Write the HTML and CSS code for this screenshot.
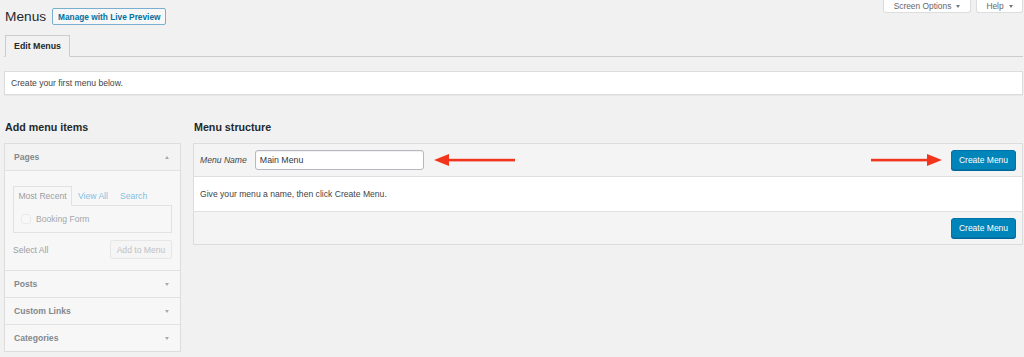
FILE: index.html
```html
<!DOCTYPE html>
<html lang="en">
<head>
    <meta charset="UTF-8">
    <meta name="viewport" content="width=device-width, initial-scale=1.0">
    <title>Menus</title>
    <link rel="stylesheet" href="styles.css">
</head>
<body>
    <div class="wrap">
        <!-- Title row + screen meta tabs -->
        <header class="page-head">
            <div class="title-group">
                <h1>Menus</h1>
                <a class="title-action" href="#">Manage with Live Preview</a>
            </div>
            <div class="screen-meta">
                <span class="meta-tab options">Screen Options <i class="caret"></i></span>
                <span class="meta-tab help">Help <i class="caret"></i></span>
            </div>
        </header>

        <nav class="nav-tabs">
            <span class="nav-tab">Edit Menus</span>
        </nav>

        <div class="notice">Create your first menu below.</div>

        <div class="columns">
            <!-- Add menu items -->
            <div class="sidebar">
                <h2>Add menu items</h2>
                <div class="accordion">
                    <div class="section open">
                        <div class="section-title">Pages <i class="arrow up"></i></div>
                        <div class="section-body">
                            <div class="inner-tabs">
                                <span class="inner-tab active">Most Recent</span>
                                <span class="inner-tab">View All</span>
                                <span class="inner-tab">Search</span>
                            </div>
                            <div class="inner-panel">
                                <label class="item"><span class="checkbox"></span>Booking Form</label>
                            </div>
                            <div class="section-actions">
                                <span class="select-all">Select All</span>
                                <span class="add-btn">Add to Menu</span>
                            </div>
                        </div>
                    </div>
                    <div class="section">
                        <div class="section-title">Posts <i class="arrow"></i></div>
                    </div>
                    <div class="section">
                        <div class="section-title">Custom Links <i class="arrow"></i></div>
                    </div>
                    <div class="section">
                        <div class="section-title">Categories <i class="arrow"></i></div>
                    </div>
                </div>
            </div>

            <!-- Menu structure -->
            <div class="management">
                <h2>Menu structure</h2>
                <div class="menu-edit">
                    <div class="menu-header">
                        <label class="menu-name-label">Menu Name</label>
                        <input class="menu-name" type="text" value="Main Menu" spellcheck="false">
                        <svg class="arrow-note left" width="81" height="12" viewBox="0 0 81 12">
                            <polygon points="0,6 15,0 15,12" fill="#f2361d"/>
                            <rect x="14" y="4.8" width="67" height="2.6" fill="#f2361d"/>
                        </svg>
                        <svg class="arrow-note right" width="71" height="12" viewBox="0 0 71 12">
                            <rect x="0" y="4.8" width="57" height="2.6" fill="#f2361d"/>
                            <polygon points="71,6 56,0 56,12" fill="#f2361d"/>
                        </svg>
                        <button class="btn-primary">Create Menu</button>
                    </div>
                    <div class="menu-body">Give your menu a name, then click Create Menu.</div>
                    <div class="menu-footer">
                        <button class="btn-primary">Create Menu</button>
                    </div>
                </div>
            </div>
        </div>
    </div>
</body>
</html>
```

FILE: styles.css
```css
body {
    margin: 0;
    padding: 0;
    font-family: "Liberation Sans", Arial, sans-serif;
    font-size: 8.6px;
    color: #444;
    background-color: #f1f1f1;
}
.wrap {
    padding: 0 1px 0 4px;
}
.page-head {
    display: flex;
    justify-content: space-between;
    align-items: flex-start;
    height: 25px;
}
.title-group {
    display: flex;
    align-items: center;
    margin-top: 8px;
    height: 17px;
}
h1 {
    margin: 0 0 0 1px;
    font-size: 13.7px;
    font-weight: normal;
    color: #23282d;
    line-height: 17px;
}
.title-action {
    margin-left: 6px;
    height: 17px;
    box-sizing: border-box;
    padding: 0 5px;
    display: flex;
    align-items: center;
    border: 1px solid #79b0cf;
    border-radius: 2px;
    background-color: #f7f7f7;
    color: #0071a1;
    font-size: 8.3px;
    font-weight: bold;
    text-decoration: none;
}
.screen-meta {
    display: flex;
    gap: 5px;
}
.meta-tab {
    height: 13px;
    box-sizing: border-box;
    display: flex;
    align-items: center;
    justify-content: center;
    gap: 5px;
    background-color: #fff;
    border: 1px solid #ddd;
    border-top: none;
    border-radius: 0 0 3px 3px;
    color: #666;
    font-size: 8.4px;
}
.meta-tab.options {
    width: 88px;
}
.meta-tab.help {
    width: 47px;
}
.caret {
    width: 0;
    height: 0;
    border-left: 2.5px solid transparent;
    border-right: 2.5px solid transparent;
    border-top: 3px solid #72777c;
}
.nav-tabs {
    margin-top: 10px;
    border-bottom: 1px solid #ccc;
    display: flex;
}
.nav-tab {
    margin-left: 1px;
    margin-bottom: -1px;
    width: 65px;
    height: 22px;
    box-sizing: border-box;
    display: flex;
    align-items: center;
    justify-content: center;
    border: 1px solid #ccc;
    border-bottom: 1px solid #f1f1f1;
    background-color: #f1f1f1;
    color: #23282d;
    font-size: 8.8px;
    font-weight: bold;
}
.notice {
    margin-top: 14px;
    height: 24px;
    box-sizing: border-box;
    padding: 0 6px;
    display: flex;
    align-items: center;
    background-color: #fff;
    border: 1px solid #dcdcdc;
    box-shadow: 0 1px 1px rgba(0, 0, 0, 0.04);
}
.columns {
    display: flex;
    gap: 12px;
    margin-top: 25px;
}
h2 {
    margin: 0 0 9px 1px;
    font-size: 10.7px;
    line-height: 14px;
    color: #23282d;
}
.sidebar {
    width: 177px;
    flex-shrink: 0;
}
.accordion {
    border: 1px solid #ddd;
    background-color: #f7f7f7;
    color: #8a8e92;
}
.section + .section {
    border-top: 1px solid #e2e2e2;
}
.section-title {
    height: 26px;
    padding: 0 9px;
    display: flex;
    align-items: center;
    justify-content: space-between;
    font-size: 8.6px;
    font-weight: bold;
    color: #84888c;
}
.open .section-title {
    background-color: #f3f3f3;
    border-bottom: 1px solid #e2e2e2;
}
.arrow {
    width: 0;
    height: 0;
    margin-right: 2px;
    border-left: 2.5px solid transparent;
    border-right: 2.5px solid transparent;
    border-top: 3px solid #a7aaad;
}
.arrow.up {
    border-top: none;
    border-bottom: 3px solid #a7aaad;
}
.section-body {
    padding: 15px 8px 11px 8px;
}
.inner-tabs {
    display: flex;
    height: 19px;
}
.inner-tab {
    display: flex;
    align-items: center;
    padding: 0 6px;
    color: #86c0df;
}
.inner-tab.active {
    width: 59px;
    box-sizing: border-box;
    justify-content: center;
    padding: 0;
    border: 1px solid #e2e2e2;
    border-bottom: 1px solid #f7f7f7;
    margin-bottom: -1px;
    color: #9a9ea2;
}
.inner-panel {
    height: 28px;
    box-sizing: border-box;
    padding: 0 7px;
    display: flex;
    align-items: center;
    border: 1px solid #e2e2e2;
}
.item {
    display: flex;
    align-items: center;
    gap: 5px;
    color: #a4a8ac;
}
.checkbox {
    width: 10px;
    height: 10px;
    box-sizing: border-box;
    border: 1px solid #eaeaea;
    border-radius: 3px;
    background-color: #f8f8f8;
}
.section-actions {
    margin-top: 7px;
    display: flex;
    justify-content: space-between;
    align-items: center;
}
.select-all {
    color: #9a9ea2;
}
.add-btn {
    width: 62px;
    height: 19px;
    box-sizing: border-box;
    display: flex;
    align-items: center;
    justify-content: center;
    border: 1px solid #e6e6e6;
    border-radius: 2px;
    background-color: #f5f5f5;
    color: #bfc2c5;
}
.management {
    flex: 1;
}
.menu-edit {
    border: 1px solid #dcdcdc;
    background-color: #fff;
}
.menu-header {
    display: flex;
    align-items: center;
    padding: 6px;
    background-color: #f4f4f4;
    border-bottom: 1px solid #dfdfdf;
}
.menu-name-label {
    font-style: italic;
    color: #444;
}
.menu-name {
    margin: 0 0 0 8px;
    width: 169px;
    height: 20px;
    box-sizing: border-box;
    padding: 0 4px;
    border: 1px solid #b5b9bd;
    border-radius: 3px;
    box-shadow: inset 0 1px 1px rgba(0, 0, 0, 0.06);
    font-family: inherit;
    font-size: 8.8px;
    color: #32373c;
}
.arrow-note.left {
    margin-left: 10px;
}
.arrow-note.right {
    margin-left: auto;
    margin-right: 9px;
}
.btn-primary {
    width: 65px;
    height: 20px;
    box-sizing: border-box;
    padding: 0;
    border: 1px solid #0073aa;
    border-radius: 3px;
    background-color: #0085ba;
    box-shadow: 0 1px 0 #006799;
    color: #fff;
    font-family: inherit;
    font-size: 8.5px;
}
.menu-body {
    height: 34px;
    box-sizing: border-box;
    padding: 0 6px;
    display: flex;
    align-items: center;
    color: #444;
}
.menu-footer {
    display: flex;
    justify-content: flex-end;
    padding: 6px;
    background-color: #f4f4f4;
    border-top: 1px solid #dfdfdf;
}
```
